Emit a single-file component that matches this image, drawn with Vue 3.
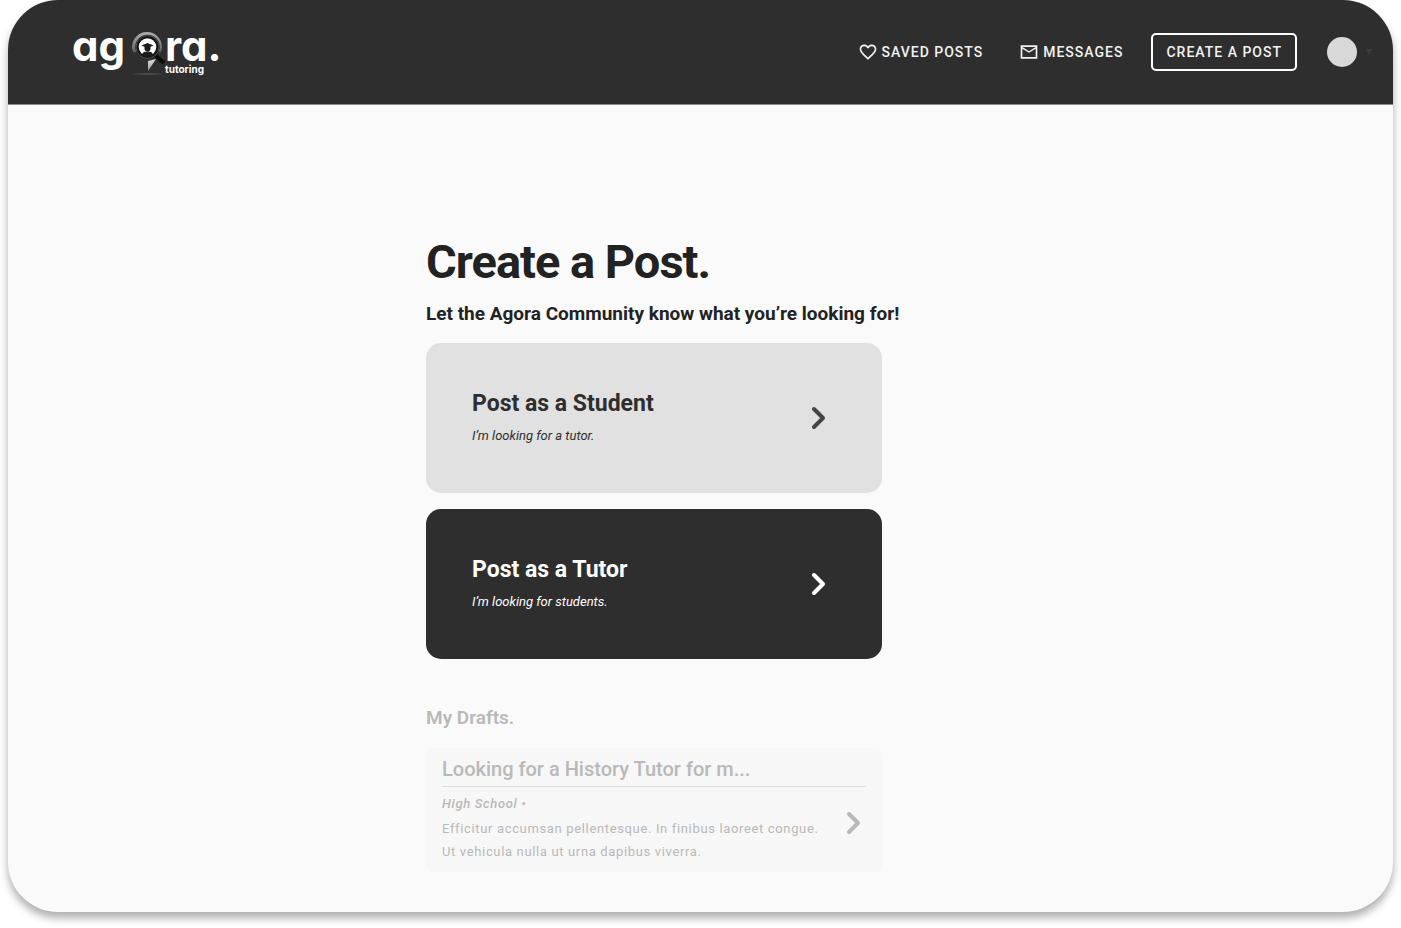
<script setup>
import { ref } from 'vue'

const postTypes = [
  { id: 'student', title: 'Post as a Student', note: 'I’m looking for a tutor.' },
  { id: 'tutor', title: 'Post as a Tutor', note: 'I’m looking for students.' },
]

const drafts = ref([
  {
    id: 1,
    title: 'Looking for a History Tutor for m...',
    level: 'High School',
    lines: [
      'Efficitur accumsan pellentesque. In finibus laoreet congue.',
      'Ut vehicula nulla ut urna dapibus viverra.',
    ],
  },
])
</script>

<template>
  <div class="frame">
    <header class="topbar">
      <a href="#" class="logo" aria-label="agora tutoring">
        <span class="logo-word">ag</span>
        <svg class="logo-pin" width="40" height="48" viewBox="0 0 40 48" fill="none">
          <defs>
            <linearGradient id="pinRing" x1="0" y1="0" x2="0" y2="1">
              <stop offset="0" stop-color="#b0b0b0" />
              <stop offset="0.8" stop-color="#343434" />
            </linearGradient>
            <linearGradient id="pinTip" x1="0" y1="0" x2="0" y2="1">
              <stop offset="0" stop-color="#e0e0e0" />
              <stop offset="1" stop-color="#9a9a9a" />
            </linearGradient>
            <radialGradient id="pinShade">
              <stop offset="0" stop-color="#585858" />
              <stop offset="1" stop-color="#2e2e2e" />
            </radialGradient>
          </defs>
          <ellipse cx="19" cy="44" rx="18" ry="1.500" fill="url(#pinShade)" />
          <path d="M3 17a15 15 0 0 1 30 0c0 8-6 11-14 24C13 29 3 26 3 17z" fill="url(#pinRing)" />
          <path d="M4 22h28l-5 8-8 11C15 33 6 30 4 22z" fill="#303030" />
          <path d="M19 31l8-2-8 12z" fill="url(#pinTip)" />
          <path d="M26 25l9 8" stroke="#0c0c0c" stroke-width="4" />
          <circle cx="18.500" cy="17" r="10.500" fill="#fff" stroke="#161616" stroke-width="3.500" />
          <circle cx="18.500" cy="17" r="11.500" stroke="#555" stroke-width="1" />
          <path d="M18.500 13l6 2.500-6 2.500-6-2.500z" fill="#1c1c1c" />
          <path d="M15.500 16h6v2.500a3 3 0 0 1-6 0z" fill="#1c1c1c" />
          <path d="M13 25c.5-3 2.500-3.500 5.500-3.500s5 .5 5.500 3.500a10 10 0 0 1-11 0z" fill="#1c1c1c" />
        </svg>
        <span class="logo-end">
          <span class="logo-word">ra.</span>
          <span class="logo-sub">tutoring</span>
        </span>
      </a>

      <nav class="nav">
        <a href="#" class="nav-link">
          <svg width="20" height="20" viewBox="0 0 24 24" fill="currentColor">
            <path
              d="M16.500 3c-1.740 0-3.410.81-4.500 2.090C10.910 3.810 9.240 3 7.500 3 4.420 3 2 5.420 2 8.500c0 3.780 3.400 6.860 8.550 11.540L12 21.350l1.450-1.320C18.600 15.360 22 12.280 22 8.500 22 5.420 19.580 3 16.500 3zm-4.400 15.550l-.1.1-.1-.1C7.140 14.240 4 11.390 4 8.500 4 6.500 5.500 5 7.500 5c1.540 0 3.040.99 3.570 2.360h1.870C13.460 5.990 14.960 5 16.500 5c2 0 3.500 1.500 3.500 3.500 0 2.890-3.140 5.740-7.900 10.050z"
            />
          </svg>
          SAVED POSTS
        </a>
        <a href="#" class="nav-link">
          <svg width="20" height="20" viewBox="0 0 24 24" fill="currentColor">
            <path
              d="M22 4H2v16h20V4zm-2 14H4V8l8 5 8-5v10zm-8-7L4 6h16l-8 5z"
            />
          </svg>
          MESSAGES
        </a>
        <button type="button" class="create">CREATE A POST</button>
        <button type="button" class="account" aria-label="Account menu">
          <span class="avatar"></span>
          <svg width="6" height="6" viewBox="0 0 6 6"><path d="M0 0h6L3 6z" fill="#3c3c3c" /></svg>
        </button>
      </nav>
    </header>

    <main class="content">
      <h1>Create a Post.</h1>
      <p class="lead">Let the Agora Community know what you’re looking for!</p>

      <div class="choices">
        <button
          v-for="type in postTypes"
          :key="type.id"
          type="button"
          class="choice"
          :class="`choice-${type.id}`"
        >
          <span class="choice-text">
            <span class="choice-title">{{ type.title }}</span>
            <span class="choice-note">{{ type.note }}</span>
          </span>
          <svg class="chevron" width="16" height="24" viewBox="0 0 16 24" fill="none">
            <path d="M3 3l9 9-9 9" />
          </svg>
        </button>
      </div>

      <section class="drafts">
        <h2>My Drafts.</h2>
        <a v-for="draft in drafts" :key="draft.id" href="#" class="draft">
          <h3>{{ draft.title }}</h3>
          <span class="draft-row">
            <span class="draft-body">
              <span class="draft-level">{{ draft.level }} •</span>
              <span v-for="line in draft.lines" :key="line">{{ line }}</span>
            </span>
            <svg class="chevron" width="16" height="24" viewBox="0 0 16 24" fill="none">
              <path d="M3 3l9 9-9 9" />
            </svg>
          </span>
        </a>
      </section>
    </main>
  </div>
</template>

<style>
body {
  background: #fff;
}
</style>

<style scoped>
.frame {
  box-sizing: border-box;
  min-height: calc(100vh - 16px);
  margin: 0 8px 16px;
  overflow: hidden;
  border-radius: 50px;
  background: #fafafa;
  box-shadow: 0 6px 8px rgba(0, 0, 0, 0.32);
  font-family: Roboto, 'Liberation Sans', sans-serif;
  color: #222;
}
.topbar {
  display: flex;
  align-items: center;
  justify-content: space-between;
  box-sizing: border-box;
  height: 105px;
  padding: 0 21px 0 64px;
  border-bottom: 1px solid #8c8c8c;
  background: #2e2e2e;
}
.logo {
  display: flex;
  align-items: flex-start;
  color: #fff;
  text-decoration: none;
}
.logo-pin {
  margin: 4px 0 0 4px;
}
.logo-word {
  font-family: Inter, 'Liberation Sans', sans-serif;
  font-feature-settings: 'cv11';
  font-size: 42px;
  font-weight: 700;
  line-height: 40px;
}
.logo-end {
  display: flex;
  flex-direction: column;
  margin-left: -4px;
}
.logo-sub {
  margin-top: -3px;
  font-family: Inter, 'Liberation Sans', sans-serif;
  font-feature-settings: 'cv11';
  font-size: 10px;
  font-weight: 700;
  line-height: 12px;
}

.nav {
  display: flex;
  align-items: center;
}
.nav-link {
  display: flex;
  align-items: center;
  gap: 4px;
  margin-right: 36px;
  color: #f2f2f2;
  font-size: 14px;
  font-weight: 500;
  letter-spacing: 1px;
  text-decoration: none;
}
.create {
  height: 38px;
  margin: 0 30px 0 -8px;
  padding: 0 13px;
  border: 2px solid #fff;
  border-radius: 5px;
  background: transparent;
  color: #f2f2f2;
  font: 500 14px Roboto, 'Liberation Sans', sans-serif;
  letter-spacing: 1px;
}
.account {
  display: flex;
  align-items: center;
  gap: 9px;
  padding: 0;
  border: 0;
  background: transparent;
}
.avatar {
  width: 30px;
  height: 30px;
  border-radius: 50%;
  background: #d9d9d9;
}

.content {
  max-width: 549px;
  margin: 0 auto;
  padding: 129px 0 40px;
}
h1 {
  margin: 0;
  font-size: 47px;
  font-weight: 700;
  line-height: 56px;
  letter-spacing: -1px;
}
.lead {
  margin: 12px 0 17px;
  font-size: 19px;
  font-weight: 700;
  line-height: 24px;
}
.choices {
  display: flex;
  flex-direction: column;
  gap: 16px;
  max-width: 456px;
}
.choice {
  display: flex;
  align-items: center;
  justify-content: space-between;
  min-height: 150px;
  padding: 0 55px 0 46px;
  border: 0;
  border-radius: 15px;
  font-family: inherit;
  text-align: left;
}
.choice-student {
  background: #e1e1e1;
  color: #2e2e2e;
}
.choice-student .chevron {
  color: #444;
}
.choice-tutor {
  background: #2e2e2e;
  color: #fff;
}
.choice-text {
  display: flex;
  flex-direction: column;
  gap: 10px;
  padding-bottom: 2px;
}
.choice-title {
  font-size: 23px;
  font-weight: 700;
  line-height: 28px;
}
.choice-note {
  font-size: 13px;
  font-style: italic;
  line-height: 16px;
}
.chevron {
  flex: none;
  stroke: currentColor;
  stroke-width: 4;
  stroke-linecap: round;
  stroke-linejoin: round;
}

.drafts {
  max-width: 456px;
  margin-top: 47px;
  color: #b9b9b9;
}
h2 {
  margin: 0 0 18px;
  font-size: 19px;
  font-weight: 600;
  line-height: 24px;
}
.draft {
  display: block;
  padding: 8px 16px 9px;
  border-radius: 8px;
  background: #f7f7f7;
  color: inherit;
  text-decoration: none;
}
h3 {
  margin: 0;
  padding-bottom: 3px;
  border-bottom: 1px solid #dedede;
  font-size: 20px;
  font-weight: 500;
  line-height: 27px;
}
.draft-row {
  display: flex;
  align-items: flex-start;
  justify-content: space-between;
  padding: 5px 4px 0 0;
}
.draft-row .chevron {
  margin-top: 19px;
}
.draft-body {
  display: flex;
  flex-direction: column;
  font-size: 13px;
  line-height: 23px;
  letter-spacing: 0.05em;
}
.draft-level {
  margin-bottom: 2px;
  font-style: italic;
  font-weight: 500;
}

@media (max-width: 800px) {
  .topbar {
    padding-left: 24px;
  }
  .nav-link {
    display: none;
  }
  .content {
    padding-right: 24px;
    padding-left: 24px;
  }
}
</style>
